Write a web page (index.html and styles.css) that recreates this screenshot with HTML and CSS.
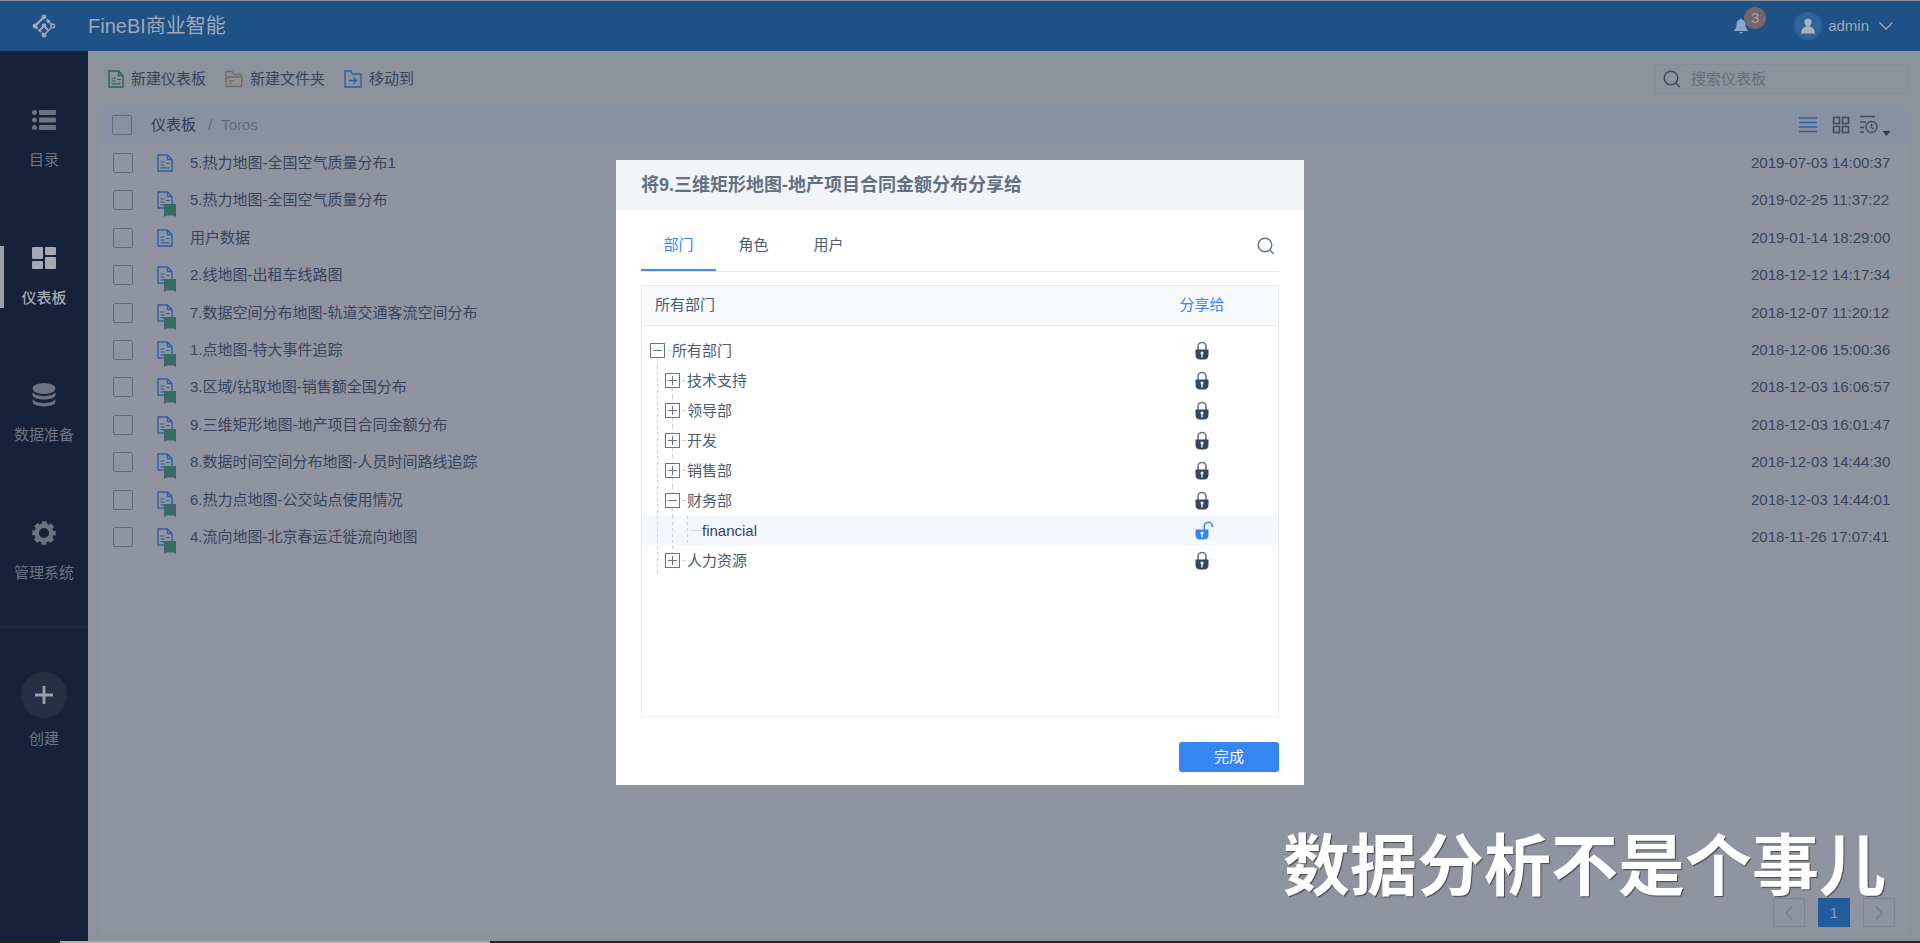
FILE: index.html
```html
<!DOCTYPE html>
<html lang="zh-CN">
<head>
<meta charset="utf-8">
<title>FineBI商业智能</title>
<link rel="stylesheet" href="styles.css">
</head>
<body>
<svg class="defs" width="0" height="0" aria-hidden="true">
  <symbol id="doc" viewBox="0 0 16 18"><path d="M1 1h9.500l4.500 4.500V17H1z M10.500 1v4.500H15" fill="none" stroke="currentColor" stroke-width="1.400"/><path d="M3.500 8h4 M9 9.500h3.500 M3.500 11h4 M3.500 13.800h9" fill="none" stroke="currentColor" stroke-width="1.200"/></symbol>
  <symbol id="flag" viewBox="0 0 12 13"><path d="M0 0h12v13l-2.500-1.500h-7L0 13z" fill="currentColor"/></symbol>
  <symbol id="magnify" viewBox="0 0 18 18"><circle cx="8" cy="8" r="6.800" fill="none" stroke="currentColor" stroke-width="1.400"/><path d="M12.800 13l4 4" stroke="currentColor" stroke-width="1.400"/></symbol>
  <symbol id="lock" viewBox="0 0 16 20"><path d="M4 9V5.500a4 4 0 0 1 8 0V9" fill="none" stroke="#66748a" stroke-width="1.600"/><path d="M1.500 8.500h13v5q0 5-4.500 5H6q-4.500 0-4.500-5z" fill="#334761"/><circle cx="8" cy="12" r="1.500" fill="#fff"/><path d="M8 12v4.500" stroke="#fff" stroke-width="1.300"/></symbol>
  <symbol id="unlock" viewBox="0 0 20 20"><path d="M10.300 9V5.500a4 4 0 0 1 8-.5v1" fill="none" stroke="#3685f2" stroke-width="1.600"/><path d="M1.500 8.500h13v5q0 5-4.500 5H6q-4.500 0-4.500-5z" fill="#3685f2"/><circle cx="8" cy="12" r="1.500" fill="#fff"/><path d="M8 12v4.500" stroke="#fff" stroke-width="1.300"/></symbol>
</svg>

<header class="topbar">
  <a class="logo" href="#" aria-label="FineBI">
    <svg width="24" height="24" viewBox="0 0 24 24" fill="none" stroke="currentColor"><path d="M3 12l9-9" stroke-width="2.400"/><path d="M14.500 5.500L20 11M3 12l9 9" stroke-width="2" stroke-dasharray="3.500 1.500"/><path d="M12 21l7-7" stroke-width="1.600"/><path d="M12 12l-4 4M12 12l4 4" stroke-width="1.800"/><g fill="currentColor" stroke="none"><circle cx="12" cy="2.800" r="2.400"/><circle cx="3" cy="12" r="2.400"/><circle cx="12" cy="21.200" r="2.400"/><circle cx="12" cy="11.500" r="2.300"/><circle cx="16.500" cy="7.500" r="1.800"/></g><circle cx="20.800" cy="12" r="1.800" stroke-width="1.400"/></svg>
  </a>
  <h1 class="product">FineBI商业智能</h1>
  <button class="bell" type="button" aria-label="通知">
    <svg width="14" height="16" viewBox="0 0 14 16" fill="currentColor"><path d="M7 0l1 1.500c2.500.6 3.500 2.500 3.500 5 0 3 .8 4.300 2.500 5.700v.8H0v-.8c1.700-1.400 2.500-2.700 2.500-5.700 0-2.500 1-4.400 3.500-5z"/><path d="M5 14h4l-2 2z"/></svg>
    <span class="badge">3</span>
  </button>
  <button class="account" type="button">
    <span class="avatar"><svg width="14" height="16" viewBox="0 0 14 16" fill="currentColor"><circle cx="7" cy="4" r="3.600"/><path d="M5 6h4l.5 3c2.500.5 4 2 4.500 6.500H0C.5 11 2 9.500 4.500 9z"/></svg></span>
    <span>admin</span>
    <svg width="14" height="8" viewBox="0 0 14 8" fill="none" stroke="currentColor" stroke-width="1.300"><path d="M.5.500L7 7 13.500.500"/></svg>
  </button>
</header>

<div class="shell">
  <aside class="sidebar">
    <nav class="nav">
      <a href="#"><svg width="24" height="24" viewBox="0 0 24 24" fill="currentColor"><circle cx="2.500" cy="4.500" r="2.500"/><circle cx="2.500" cy="12" r="2.500"/><circle cx="2.500" cy="19.500" r="2.500"/><rect x="7" y="2" width="17" height="5" rx="1"/><rect x="7" y="9.500" width="17" height="5" rx="1"/><rect x="7" y="17" width="17" height="5" rx="1"/></svg><span>目录</span></a>
      <a href="#" class="active"><svg width="24" height="24" viewBox="0 0 24 24" fill="currentColor"><rect y="1" width="11" height="12" rx="1"/><rect x="13" y="1" width="11" height="8" rx="1"/><rect y="15" width="11" height="8" rx="1"/><rect x="13" y="11" width="11" height="12" rx="1"/></svg><span>仪表板</span></a>
      <a href="#"><svg width="24" height="24" viewBox="0 0 24 24" fill="currentColor"><ellipse cx="12" cy="5.500" rx="11.500" ry="5.500"/><path d="M.5 9c3 5.500 20 5.500 23 0v3c-1 6-22 6-23 0z"/><path d="M.5 16c3 5.500 20 5.500 23 0v2.500c-1 6.500-22 6.500-23 0z"/></svg><span>数据准备</span></a>
      <a href="#"><svg width="26" height="26" viewBox="0 0 26 26" fill="none" stroke="currentColor"><circle cx="13" cy="13" r="8" stroke-width="5"/><circle cx="13" cy="13" r="11" stroke-width="3.500" stroke-dasharray="5.240 3.400" stroke-dashoffset="2.620"/></svg><span>管理系统</span></a>
    </nav>
    <button class="create" type="button"><span class="plus"><svg width="18" height="18" viewBox="0 0 18 18" stroke="currentColor" stroke-width="2.800"><path d="M9 0v18M0 9h18"/></svg></span><span>创建</span></button>
  </aside>

  <main class="main">
    <div class="toolbar">
      <button type="button"><svg class="green" width="16" height="18"><use href="#doc"/></svg>新建仪表板</button>
      <button type="button"><svg class="tan" width="18" height="18" viewBox="0 0 18 18" fill="none" stroke="currentColor" stroke-width="1.300"><path d="M1 16V1.500h6l2 3h7v2.500M1 16.500h15.500L17 7H4.500L1 8.500M4 11h5M4 13.500h2.500"/></svg>新建文件夹</button>
      <button type="button"><svg class="blue" width="18" height="18" viewBox="0 0 18 18" fill="none" stroke="currentColor" stroke-width="1.300"><path d="M1 17V1h6l1.500 3H17v13zM5 10.500h7.500M9.500 7.500l3 3-3 3"/></svg>移动到</button>
      <label class="search"><svg width="18" height="18"><use href="#magnify"/></svg><input type="search" placeholder="搜索仪表板" aria-label="搜索仪表板"></label>
    </div>

    <section class="panel">
      <div class="crumbs">
        <input type="checkbox" aria-label="全选">
        <a href="#">仪表板</a><span class="sep">/</span><span class="here">Toros</span>
        <div class="views">
          <button type="button" class="blue" aria-label="列表视图"><svg width="18" height="18" viewBox="0 0 18 18" stroke="currentColor" stroke-width="1.300"><path d="M0 2h18M0 6.500h18M0 11h18M0 15.500h18"/></svg></button>
          <button type="button" aria-label="网格视图"><svg width="18" height="18" viewBox="0 0 18 18" fill="none" stroke="currentColor" stroke-width="1.600"><rect x="1.500" y="1.500" width="6" height="6"/><rect x="10.500" y="1.500" width="6" height="6"/><rect x="1.500" y="10.500" width="6" height="6"/><rect x="10.500" y="10.500" width="6" height="6"/></svg></button>
          <button type="button" class="sort" aria-label="按时间排序"><svg width="32" height="22" viewBox="0 0 32 22" fill="none" stroke="currentColor" stroke-width="1.400"><path d="M1 2.500h15M1 8h6M1 13.500h4M1 18h4"/><circle cx="12.500" cy="13" r="5.500"/><path d="M12.500 9.500v4l2.500 1.500"/><path d="M23.500 17h8l-4 5z" fill="#2f3c52" stroke="none"/></svg></button>
        </div>
      </div>

      <table class="files">
        <tbody>
          <tr><td class="pick"><input type="checkbox" aria-label="选择"></td><td class="kind"><span><svg width="16" height="18"><use href="#doc"/></svg></span></td><td>5.热力地图-全国空气质量分布1</td><td class="time">2019-07-03 14:00:37</td></tr>
          <tr><td class="pick"><input type="checkbox" aria-label="选择"></td><td class="kind"><span><svg width="16" height="18"><use href="#doc"/></svg><svg class="flag" width="12" height="13"><use href="#flag"/></svg></span></td><td>5.热力地图-全国空气质量分布</td><td class="time">2019-02-25 11:37:22</td></tr>
          <tr><td class="pick"><input type="checkbox" aria-label="选择"></td><td class="kind"><span><svg width="16" height="18"><use href="#doc"/></svg></span></td><td>用户数据</td><td class="time">2019-01-14 18:29:00</td></tr>
          <tr><td class="pick"><input type="checkbox" aria-label="选择"></td><td class="kind"><span><svg width="16" height="18"><use href="#doc"/></svg><svg class="flag" width="12" height="13"><use href="#flag"/></svg></span></td><td>2.线地图-出租车线路图</td><td class="time">2018-12-12 14:17:34</td></tr>
          <tr><td class="pick"><input type="checkbox" aria-label="选择"></td><td class="kind"><span><svg width="16" height="18"><use href="#doc"/></svg><svg class="flag" width="12" height="13"><use href="#flag"/></svg></span></td><td>7.数据空间分布地图-轨道交通客流空间分布</td><td class="time">2018-12-07 11:20:12</td></tr>
          <tr><td class="pick"><input type="checkbox" aria-label="选择"></td><td class="kind"><span><svg width="16" height="18"><use href="#doc"/></svg><svg class="flag" width="12" height="13"><use href="#flag"/></svg></span></td><td>1.点地图-特大事件追踪</td><td class="time">2018-12-06 15:00:36</td></tr>
          <tr><td class="pick"><input type="checkbox" aria-label="选择"></td><td class="kind"><span><svg width="16" height="18"><use href="#doc"/></svg><svg class="flag" width="12" height="13"><use href="#flag"/></svg></span></td><td>3.区域/钻取地图-销售额全国分布</td><td class="time">2018-12-03 16:06:57</td></tr>
          <tr><td class="pick"><input type="checkbox" aria-label="选择"></td><td class="kind"><span><svg width="16" height="18"><use href="#doc"/></svg><svg class="flag" width="12" height="13"><use href="#flag"/></svg></span></td><td>9.三维矩形地图-地产项目合同金额分布</td><td class="time">2018-12-03 16:01:47</td></tr>
          <tr><td class="pick"><input type="checkbox" aria-label="选择"></td><td class="kind"><span><svg width="16" height="18"><use href="#doc"/></svg><svg class="flag" width="12" height="13"><use href="#flag"/></svg></span></td><td>8.数据时间空间分布地图-人员时间路线追踪</td><td class="time">2018-12-03 14:44:30</td></tr>
          <tr><td class="pick"><input type="checkbox" aria-label="选择"></td><td class="kind"><span><svg width="16" height="18"><use href="#doc"/></svg><svg class="flag" width="12" height="13"><use href="#flag"/></svg></span></td><td>6.热力点地图-公交站点使用情况</td><td class="time">2018-12-03 14:44:01</td></tr>
          <tr><td class="pick"><input type="checkbox" aria-label="选择"></td><td class="kind"><span><svg width="16" height="18"><use href="#doc"/></svg><svg class="flag" width="12" height="13"><use href="#flag"/></svg></span></td><td>4.流向地图-北京春运迁徙流向地图</td><td class="time">2018-11-26 17:07:41</td></tr>
        </tbody>
      </table>

      <div class="pager">
        <button type="button" aria-label="上一页"><svg width="8" height="14" viewBox="0 0 8 14" fill="none" stroke="currentColor" stroke-width="1.300"><path d="M7 .5L1 7l6 6.500"/></svg></button>
        <button type="button" class="current">1</button>
        <button type="button" aria-label="下一页"><svg width="8" height="14" viewBox="0 0 8 14" fill="none" stroke="currentColor" stroke-width="1.300"><path d="M1 .5L7 7l-6 6.500"/></svg></button>
      </div>
    </section>
  </main>
</div>
<div class="playbar"><span></span></div>

<div class="layer">
  <div class="dialog" role="dialog" aria-labelledby="share-title">
    <h2 id="share-title">将9.三维矩形地图-地产项目合同金额分布分享给</h2>
    <div class="body">
      <div class="tabs">
        <button type="button" class="on">部门</button>
        <button type="button">角色</button>
        <button type="button">用户</button>
        <button type="button" class="find" aria-label="搜索"><svg width="18" height="18"><use href="#magnify"/></svg></button>
      </div>
      <div class="box">
        <table class="tree">
          <thead><tr><th>所有部门</th><th class="share">分享给</th></tr></thead>
          <tbody>
            <tr><td><div class="node"><span class="knot"><i></i><button type="button" aria-label="收起"></button><i class="line"></i></span><i class="dash"></i>所有部门</div></td><td class="share"><svg width="16" height="20"><use href="#lock"/></svg></td></tr>
            <tr><td><div class="node"><i class="line guide"></i><span class="knot"><i></i><button type="button" class="plus-box" aria-label="展开"></button><i class="line"></i></span><i class="dash"></i>技术支持</div></td><td class="share"><svg width="16" height="20"><use href="#lock"/></svg></td></tr>
            <tr><td><div class="node"><i class="line guide"></i><span class="knot"><i class="line"></i><button type="button" class="plus-box" aria-label="展开"></button><i class="line"></i></span><i class="dash"></i>领导部</div></td><td class="share"><svg width="16" height="20"><use href="#lock"/></svg></td></tr>
            <tr><td><div class="node"><i class="line guide"></i><span class="knot"><i class="line"></i><button type="button" class="plus-box" aria-label="展开"></button><i class="line"></i></span><i class="dash"></i>开发</div></td><td class="share"><svg width="16" height="20"><use href="#lock"/></svg></td></tr>
            <tr><td><div class="node"><i class="line guide"></i><span class="knot"><i class="line"></i><button type="button" class="plus-box" aria-label="展开"></button><i class="line"></i></span><i class="dash"></i>销售部</div></td><td class="share"><svg width="16" height="20"><use href="#lock"/></svg></td></tr>
            <tr><td><div class="node"><i class="line guide"></i><span class="knot"><i class="line"></i><button type="button" aria-label="收起"></button><i class="line"></i></span><i class="dash"></i>财务部</div></td><td class="share"><svg width="16" height="20"><use href="#lock"/></svg></td></tr>
            <tr class="picked"><td><div class="node"><i class="line guide"></i><i class="line guide"></i><i class="line guide"></i><i class="dash"></i>financial</div></td><td class="share"><svg class="open" width="20" height="20"><use href="#unlock"/></svg></td></tr>
            <tr><td><div class="node"><i class="line guide"></i><span class="knot"><i class="line"></i><button type="button" class="plus-box" aria-label="展开"></button><i></i></span><i class="dash"></i>人力资源</div></td><td class="share"><svg width="16" height="20"><use href="#lock"/></svg></td></tr>
          </tbody>
        </table>
      </div>
      <button type="button" class="done">完成</button>
    </div>
  </div>
</div>
<p class="watermark">数据分析不是个事儿</p>
</body>
</html>
```

FILE: styles.css
```css
* { box-sizing: border-box; }
body {
  margin: 0;
  min-height: 100vh;
  display: flex;
  flex-direction: column;
  background: #8b929c;
  color: #37445b;
  font: 15px/20px "Liberation Sans", "Noto Sans CJK SC", sans-serif;
}
svg { display: block; flex: none; }
.defs { position: absolute; }
button {
  margin: 0;
  padding: 0;
  border: 0;
  background: none;
  color: inherit;
  font: inherit;
}
a { color: inherit; text-decoration: none; }
h1, h2, p { margin: 0; }
.green { color: #2a645c; }
.tan { color: #776a64; }
.blue { color: #2d5fa5; }

/* top bar */
.topbar {
  display: flex;
  align-items: center;
  height: 51px;
  padding-right: 27px;
  border-top: 1px solid #8b929c;
  background: #1e5186;
  color: #a0a9b5;
}
.logo { width: 88px; display: flex; justify-content: center; }
.product { font-size: 20px; line-height: 28px; font-weight: 400; flex: 1; }
.bell { position: relative; margin-right: 46px; color: #8ba6c8; }
.badge {
  position: absolute;
  left: 10px;
  top: -11px;
  width: 22px;
  height: 22px;
  border-radius: 50%;
  background: #75656c;
  color: #a9a4a8;
  line-height: 22px;
  text-align: center;
}
.account { display: flex; align-items: center; gap: 6px; }
.account > svg { margin-left: 4px; }
.avatar {
  display: grid;
  place-items: center;
  width: 28px;
  height: 28px;
  border-radius: 50%;
  background: #2f639b;
  color: #a7b0bd;
}

/* side bar */
.shell { flex: 1; display: flex; }
.sidebar { width: 88px; flex: none; background: #15223a; color: #6b7384; }
.nav {
  display: grid;
  grid-template-rows: repeat(4, 1fr);
  height: 570px;
  margin-bottom: 4px;
  padding-top: 19px;
}
.nav a, .create {
  display: flex;
  flex-direction: column;
  align-items: center;
  justify-content: center;
  gap: 18px;
}
.nav svg { height: 24px; overflow: visible; }
.nav a { align-self: center; height: 62px; border-left: 4px solid transparent; border-right: 4px solid transparent; }
.nav .active { border-left-color: #9aa0aa; color: #a3a8b2; font-weight: 500; }
.create {
  width: 100%;
  gap: 11px;
  padding-top: 44px;
  border-top: 3px solid #1d2941;
}
.plus {
  display: grid;
  place-items: center;
  width: 46px;
  height: 46px;
  border-radius: 50%;
  background: #252f44;
  color: #9ba1ac;
}

/* content */
.main { flex: 1; display: flex; flex-direction: column; padding: 0 12px 9px; }
.toolbar { display: flex; align-items: center; gap: 19px; height: 55px; padding-left: 8px; }
.toolbar button { display: flex; align-items: center; gap: 7px; }
.search {
  display: flex;
  align-items: center;
  gap: 10px;
  width: 253px;
  height: 30px;
  margin-left: auto;
  padding-left: 7px;
  border: 1px solid #868d98;
  color: #3d485b;
}
.search input {
  flex: 1;
  min-width: 0;
  padding: 0;
  border: 0;
  outline: 0;
  background: none;
  font: inherit;
}
.search input::placeholder { color: #666e7c; opacity: 1; }
.panel { flex: 1; display: flex; flex-direction: column; background: #9094a0; }
.crumbs {
  display: flex;
  align-items: center;
  height: 38px;
  padding: 0 17px 0 12px;
  background: #8692a2;
}
.crumbs a { margin-left: 19px; color: #2f3c52; }
.sep { margin: 0 9px 0 12px; color: #5f6978; }
.here { color: #626b7a; }
input[type="checkbox"] {
  appearance: none;
  display: block;
  width: 20px;
  height: 20px;
  margin: 0;
  border: 1px solid #626b7b;
  border-radius: 2px;
}
.views { display: flex; align-items: center; gap: 15px; margin-left: auto; color: #414c60; }
.views .sort { margin-left: -6px; }
.files { width: 100%; height: 412px; border-collapse: collapse; table-layout: fixed; }
.files td { padding: 0; }
.files .pick { width: 57px; padding-left: 13px; }
.files .kind { width: 33px; color: #2d5fa5; }
.kind span { position: relative; display: block; width: 16px; }
.flag { position: absolute; left: 7px; top: 13px; color: #386b65; }
.files .time { width: 157px; }
.pager { display: flex; gap: 13px; margin: auto 13px 5px auto; color: #747b89; }
.pager button {
  display: grid;
  place-items: center;
  width: 32px;
  height: 29px;
  border: 1px solid #7f8693;
}
.pager .current { border: 0; background: #225c9c; color: #8f9fb6; }
.playbar { height: 2px; background: #20242b; }
.playbar span { display: block; width: 430px; height: 2px; margin-left: 60px; background: #a9adb4; }

/* share dialog */
.layer { position: fixed; inset: 0; display: grid; place-items: center; padding-top: 2px; }
.dialog { width: 688px; background: #fff; color: #4d5b70; }
.dialog h2 {
  padding: 0 25px;
  background: #f2f4f8;
  color: #627083;
  font-size: 18px;
  line-height: 50px;
}
.body { display: flex; flex-direction: column; padding: 10px 25px 13px; }
.tabs { display: flex; height: 52px; border-bottom: 1px solid #e4e7ee; }
.tabs button { width: 75px; border-bottom: 2px solid transparent; }
.tabs .on { border-bottom-color: #3f8bf0; color: #3685f2; }
.tabs .find { width: auto; margin-left: auto; padding: 2px 4px 0 0; color: #65728a; }
.box { height: 432px; margin: 13px 0 25px; border: 1px solid #e6e9ef; }
.tree { width: 100%; border-collapse: collapse; table-layout: fixed; }
.tree th {
  height: 39px;
  padding: 0 0 0 13px;
  border-bottom: 1px solid #e6e9ef;
  background: #f7f9fb;
  font-weight: 400;
  text-align: left;
}
.tree tbody::before { content: ""; display: block; height: 10px; }
.tree td { height: 30px; padding: 0 0 0 8px; }
.tree .share { width: 152px; padding: 0; text-align: center; }
.tree th.share { color: #3685f2; }
.share svg { margin: 0 auto; }
.share .open { margin-left: 68px; }
.picked { background: #f4f7fc; color: #37445b; }
.node { display: flex; align-items: center; height: 30px; }
.knot { display: flex; flex-direction: column; align-items: center; width: 15px; height: 30px; }
.knot i { flex: 1; width: 1px; }
.line { background: repeating-linear-gradient(#c9ced8 0 3px, transparent 3px 6px); }
.guide { width: 1px; height: 30px; margin: 0 7px; }
.knot button {
  width: 15px;
  height: 15px;
  border: 1px solid #66748a;
  background: linear-gradient(#66748a, #66748a) center / 9px 1px no-repeat;
}
.knot .plus-box {
  background:
    linear-gradient(#66748a, #66748a) center / 9px 1px no-repeat,
    linear-gradient(#66748a, #66748a) center / 1px 9px no-repeat;
}
.dash { width: 4px; height: 1px; margin: 0 1px 0 2px; background: #ccd1da; }
.guide + .dash { width: 10px; margin: 0 1px 0 -4px; }
.done {
  width: 100px;
  height: 30px;
  align-self: flex-end;
  border-radius: 3px;
  background: #3685f2;
  color: #fff;
}

.watermark {
  position: fixed;
  right: 34px;
  bottom: 34px;
  color: #fff;
  font: 700 67px/96px "Noto Sans CJK SC", sans-serif;
  text-shadow: 1px 1px 1px #4b4648;
  pointer-events: none;
}
```
